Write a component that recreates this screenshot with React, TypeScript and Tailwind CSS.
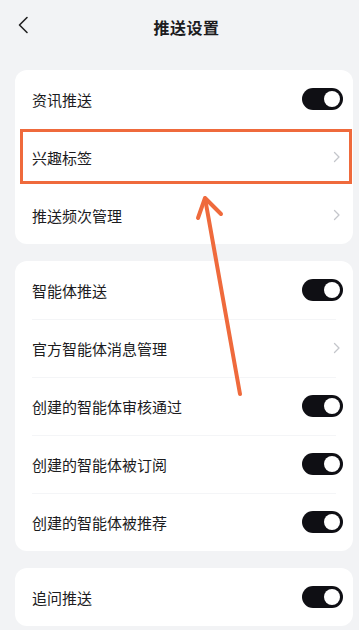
import React from "react";

type Row = { label: string; kind: "toggle" | "link" };

const groups: Row[][] = [
  [
    { label: "资讯推送", kind: "toggle" },
    { label: "兴趣标签", kind: "link" },
    { label: "推送频次管理", kind: "link" },
  ],
  [
    { label: "智能体推送", kind: "toggle" },
    { label: "官方智能体消息管理", kind: "link" },
    { label: "创建的智能体审核通过", kind: "toggle" },
    { label: "创建的智能体被订阅", kind: "toggle" },
    { label: "创建的智能体被推荐", kind: "toggle" },
  ],
  [{ label: "追问推送", kind: "toggle" }],
];

function Toggle() {
  return (
    <div className="w-[41px] h-[22px] rounded-full bg-[#0f0f14] flex items-center justify-end pr-[3px]">
      <div className="w-[16px] h-[16px] rounded-full bg-white" />
    </div>
  );
}

function Chevron() {
  return (
    <svg width="8" height="12" viewBox="0 0 8 12" className="mr-[2px]">
      <path d="M1.5 1.5 L6 6 L1.5 10.5" fill="none" stroke="#c4c6cb" strokeWidth="1.3" strokeLinecap="round" strokeLinejoin="round" />
    </svg>
  );
}

export default function App() {
  return (
    <div
      className="relative min-h-screen w-[359px] overflow-hidden bg-[#f2f3f5] pl-[15px] pr-[6px] text-[#1c1c1e]"
      style={{ fontFamily: '"Noto Sans CJK SC", "Noto Sans", sans-serif' }}
    >
      {/* header */}
      <header className="relative h-[54px] flex items-center justify-center">
        <svg width="12" height="18" viewBox="0 0 12 18" className="absolute left-[2px] top-[16px]">
          <path d="M10 1.5 L2.5 9 L10 16.5" fill="none" stroke="#222" strokeWidth="1.6" strokeLinecap="round" strokeLinejoin="round" />
        </svg>
        <h1 className="ml-[5px] text-[16px] font-bold tracking-[0.5px]">推送设置</h1>
      </header>

      <div className="mt-[16px] flex flex-col gap-[17px]">
        {groups.map((rows, gi) => (
          <div key={gi} className="bg-white rounded-[12px]">
            {rows.map((r, ri) => (
              <div key={r.label} className="relative h-[58px] flex items-center justify-between pl-[17px] pr-[10px]">
                <span className="text-[15px] leading-none">{r.label}</span>
                {r.kind === "toggle" ? <Toggle /> : <Chevron />}
                {gi === 1 && ri > 0 && (
                  <div className="absolute top-0 left-[17px] right-[17px] h-px bg-[#f4f5f7]" />
                )}
                {gi === 0 && ri === 1 && (
                  <div className="absolute top-[1px] bottom-[2px] left-[4.5px] right-[1px] border-[3px] border-[#ef6a3c]" />
                )}
              </div>
            ))}
          </div>
        ))}
      </div>

      {/* annotation arrow */}
      <svg className="absolute top-0 left-0 pointer-events-none" width="359" height="630" viewBox="0 0 359 630">
        <line x1="240" y1="394" x2="205.5" y2="201" stroke="#ef6a3c" strokeWidth="4" strokeLinecap="round" />
        <path d="M198 218 L205 198 L221 214" fill="none" stroke="#ef6a3c" strokeWidth="4" strokeLinecap="round" strokeLinejoin="round" />
      </svg>
    </div>
  );
}
